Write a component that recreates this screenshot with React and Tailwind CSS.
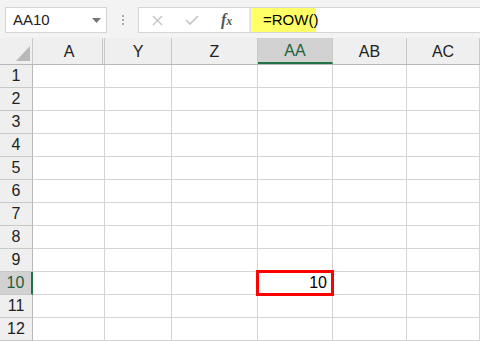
import React from 'react';

const cols = [
    { name: 'A', w: 'w-[72px]' },
    { name: 'Y', w: 'w-[67px]' },
    { name: 'Z', w: 'w-[86px]' },
    { name: 'AA', w: 'w-[75px]' },
    { name: 'AB', w: 'w-[74px]' },
    { name: 'AC', w: 'w-[73px]' },
];

const rows = [1, 2, 3, 4, 5, 6, 7, 8, 9, 10, 11, 12];

export default function App() {
    return (
        <div className="w-[480px] h-[342px] overflow-hidden bg-white text-[15px] text-black" style={{ fontFamily: '"Liberation Sans", Arial, sans-serif' }}>
            {/* formula bar */}
            <div className="h-[38px] bg-[#f3f3f3] flex items-start pt-[7px]">
                <div className="ml-[5px] w-[102px] h-[26px] bg-white border border-[#d4d4d4] flex items-center justify-between pl-[7px] pr-[5px]">
                    <span className="text-[15px] text-[#222]">AA10</span>
                    <svg width="9" height="5" viewBox="0 0 9 5"><path d="M0 0h9L4.5 5z" fill="#777" /></svg>
                </div>
                <div className="w-[31px] h-[26px] flex flex-col items-center justify-center gap-[2px]">
                    <span className="w-[2px] h-[2px] bg-[#aaa]" />
                    <span className="w-[2px] h-[2px] bg-[#aaa]" />
                    <span className="w-[2px] h-[2px] bg-[#aaa]" />
                </div>
                <div className="flex-1 h-[26px] bg-white border border-[#d4d4d4] border-r-0 flex items-center">
                    <div className="w-[110px] flex items-center h-full">
                        <svg className="ml-[13px]" width="11" height="11" viewBox="0 0 11 11"><path d="M1 1l9 9M10 1l-9 9" stroke="#c4c4c4" strokeWidth="1.4" /></svg>
                        <svg className="ml-[22px]" width="14" height="10" viewBox="0 0 14 10"><path d="M1 5l4 4 8-8" stroke="#c4c4c4" strokeWidth="1.6" fill="none" /></svg>
                        <span className="ml-[22px] text-[16px] italic font-bold text-[#555]" style={{ fontFamily: '"Liberation Serif", serif' }}>f<span className="text-[12px]">x</span></span>
                    </div>
                    <div className="w-[2px] h-full bg-[#e4e4e4]" />
                    <div className="w-[65px] h-full bg-[#ffff66] flex items-center pl-[12px] text-[15px]">=ROW()</div>
                </div>
            </div>

            {/* column headers */}
            <div className="flex h-[27px] bg-[#efefef] border-b border-[#b8b8b8]">
                <div className="w-[33px] border-r border-[#c8c8c8] relative">
                    <svg className="absolute left-[16px] top-[8px]" width="14" height="15" viewBox="0 0 14 15"><path d="M14 0v15H0z" fill="#b9b9b9" /></svg>
                </div>
                {cols.map((c) => (
                    <div
                        key={c.name}
                        className={`${c.w} ${c.name === 'AA' ? 'bg-[#d2d2d2] border-b-2 border-b-[#217346] text-[#1f5f3a]' : 'text-[#222]'} ${c.name === 'A' ? 'border-r-[3px] border-double pl-[3px]' : 'border-r'} border-[#c8c8c8] flex items-center justify-center pt-[1px] text-[16px]`}
                    >
                        {c.name}
                    </div>
                ))}
            </div>

            {/* rows */}
            <div className="relative">
                {rows.map((r) => (
                    <div key={r} className="flex h-[23px]">
                        <div className={`w-[33px] flex items-center justify-center border-b border-[#c8c8c8] text-[16px] ${r === 10 ? 'bg-[#d2d2d2] border-r-2 border-r-[#217346] text-[#1f5f3a]' : 'bg-[#efefef] border-r border-r-[#b8b8b8] text-[#222]'}`}>
                            {r}
                        </div>
                        {cols.map((c) => (
                            <div key={c.name} className={`${c.w} border-r border-b border-[#d4d4d4] flex items-center justify-end pr-[5px] text-[16px]`}>
                                {r === 10 && c.name === 'AA' ? '10' : ''}
                            </div>
                        ))}
                    </div>
                ))}
                <div className="absolute left-[256px] top-[205px] w-[78px] h-[26px] border-[3px] border-[#ff0000]" />
            </div>
        </div>
    );
}
